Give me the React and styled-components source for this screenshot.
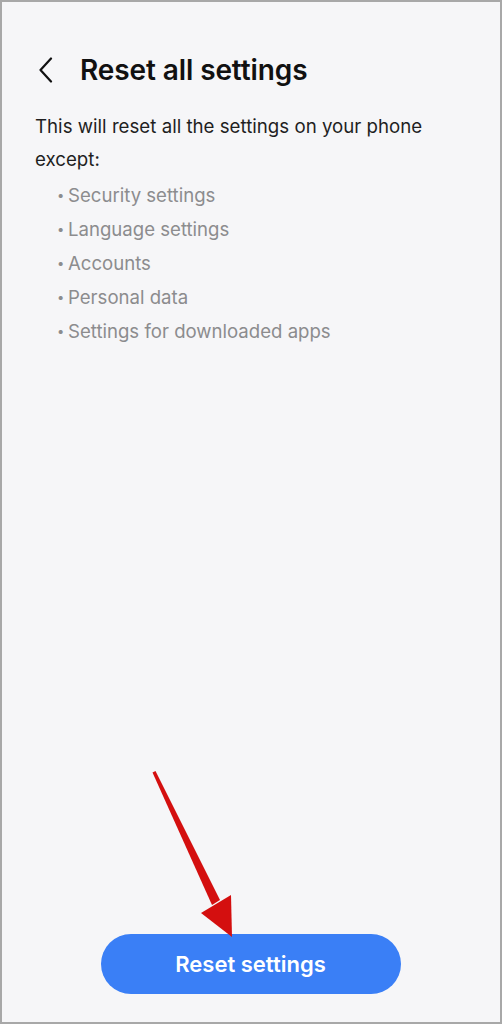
import React from "react";
import styled, { createGlobalStyle } from "styled-components";

const Global = createGlobalStyle`
  html, body { margin: 0; padding: 0; background: #f6f6f8; }
  body { font-family: Inter, Roboto, "Noto Sans", sans-serif; }
`;

const Screen = styled.div`
  position: relative;
  box-sizing: border-box;
  width: 502px;
  height: 1024px;
  background: #f6f6f8;
  border: 2px solid #a8a8a8;
  display: flex;
  flex-direction: column;
`;

const Header = styled.div`
  display: flex;
  align-items: center;
  height: 40px;
  margin-top: 48px;
  padding-left: 34px;
`;

const BackButton = styled.button`
  border: 0;
  background: none;
  padding: 0;
  width: 20px;
  height: 30px;
  display: flex;
  align-items: center;
  justify-content: center;
  margin-right: 24px;
  color: #111;
`;

const Title = styled.h1`
  margin: 0;
  font-size: 28px;
  font-weight: 600;
  color: #111;
  letter-spacing: -0.1px;
`;

const Content = styled.div`
  padding: 20px 33px 0 33px;
  flex: 1;
`;

const Intro = styled.p`
  margin: 0;
  font-size: 18.7px;
  line-height: 33px;
  color: #1f1f1f;
`;

const List = styled.ul`
  list-style: none;
  margin: 2px 0 0 0;
  padding: 0 0 0 22px;
`;

const Item = styled.li`
  display: flex;
  align-items: center;
  height: 34px;
  font-size: 18.6px;
  color: #8c8c8e;
  &::before {
    content: "•";
    width: 11px;
    font-size: 13px;
  }
`;

const Footer = styled.div`
  display: flex;
  justify-content: center;
  padding-bottom: 28px;
  padding-right: 1px;
`;

const PrimaryButton = styled.button`
  width: 300px;
  height: 60px;
  border: 0;
  border-radius: 30px;
  background: #3a7ff6;
  color: #fff;
  font-family: inherit;
  font-size: 22px;
  font-weight: 600;
`;

const Annotation = styled.svg`
  position: absolute;
  left: 0;
  top: 0;
  pointer-events: none;
`;

const items = [
  "Security settings",
  "Language settings",
  "Accounts",
  "Personal data",
  "Settings for downloaded apps",
];

export default function App() {
  return (
    <>
      <Global />
      <Screen>
        <Header>
          <BackButton aria-label="Back">
            <svg width="16" height="26" viewBox="0 0 16 26" fill="none">
              <path d="M13 1.5 L2.5 13 L13 24.5" stroke="#111" strokeWidth="2.2" strokeLinecap="round" strokeLinejoin="round" />
            </svg>
          </BackButton>
          <Title>Reset all settings</Title>
        </Header>
        <Content>
          <Intro>This will reset all the settings on your phone except:</Intro>
          <List>
            {items.map((t) => (
              <Item key={t}>{t}</Item>
            ))}
          </List>
        </Content>
        <Footer>
          <PrimaryButton>Reset settings</PrimaryButton>
        </Footer>
        <Annotation width="502" height="1024" viewBox="0 0 502 1024">
          <polygon points="150.5,770.5 153.5,769 218,898 210,903" fill="#d40f0f" />
          <polygon points="199,911 229,893 230,935" fill="#d40f0f" />
        </Annotation>
      </Screen>
    </>
  );
}
